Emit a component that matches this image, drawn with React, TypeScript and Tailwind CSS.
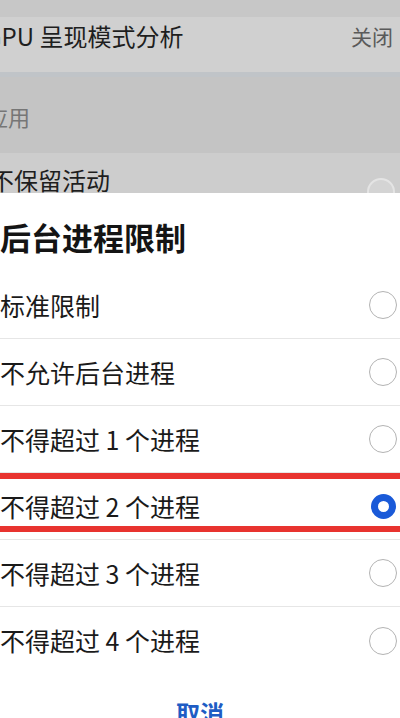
import React from "react";

const font = { fontFamily: '"Noto Sans CJK SC", "Noto Sans", sans-serif' };

function Radio({ checked }: { checked?: boolean }) {
  if (checked) {
    return (
      <div className="w-[28px] h-[28px] flex items-center justify-center">
        <div className="w-[25px] h-[25px] rounded-full border-[7px] border-[#1a5ad8] bg-white" />
      </div>
    );
  }
  return <div className="w-[28px] h-[28px] rounded-full border-[1.5px] border-[#b3b3b3] bg-white" />;
}

const options = [
  "标准限制",
  "不允许后台进程",
  "不得超过 1 个进程",
  "不得超过 2 个进程",
  "不得超过 3 个进程",
  "不得超过 4 个进程",
];

export default function App() {
  return (
    <div className="w-[400px] h-[718px] overflow-hidden bg-white flex flex-col" style={font}>
      <div className="h-[17px] bg-[#c7c7c7] shrink-0" />
      <div className="h-[55px] bg-[#d0d0d0] shrink-0 flex items-start justify-between pt-[7px] pr-[7px]">
        <span className="text-[24px] leading-none text-[#1e1e1e] ml-[-15px]">GPU 呈现模式分析</span>
        <span className="text-[21px] leading-none text-[#5a5a5a] mt-[2px]">关闭</span>
      </div>
      <div className="h-[5px] bg-[#c0c4c8] shrink-0" />
      <div className="h-[76px] bg-[#c4c4c4] shrink-0 pt-[28px]">
        <span className="text-[22px] leading-none text-[#767676] ml-[-14px] block">应用</span>
      </div>
      <div className="h-[40px] bg-[#cdcdcd] shrink-0 overflow-hidden flex items-start justify-between pt-[15px] pr-[5px]">
        <span className="text-[24px] leading-none text-[#1e1e1e] ml-[-10px]">不保留活动</span>
        <div className="w-[28px] h-[28px] rounded-full border-[2px] border-[#e4e4e4] mt-[10px] bg-[#d4d4d4]" />
      </div>
      <div className="relative bg-white flex-1 flex flex-col">
        <div className="pt-[28px] pb-[20px]">
          <span className="text-[31px] leading-none font-semibold text-[#141414] block">后台进程限制</span>
        </div>
        {options.map((o, i) => (
          <div
            key={o}
            className={`h-[67px] shrink-0 flex items-center justify-between pr-[3px] ${i < 5 ? "border-b border-[#e6e6e6]" : ""}`}
          >
            <span className="text-[25px] leading-none text-[#1a1a1a]">{o}</span>
            <Radio checked={i === 3} />
          </div>
        ))}
        <div className="flex justify-center pt-[27px]">
          <span className="text-[24px] leading-none font-semibold text-[#1e5cc4]">取消</span>
        </div>
        <div className="absolute left-0 right-0 top-[280px] h-[6px] bg-[#e8332f]" />
        <div className="absolute left-0 right-0 top-[333px] h-[6px] bg-[#e8332f]" />
      </div>
    </div>
  );
}
